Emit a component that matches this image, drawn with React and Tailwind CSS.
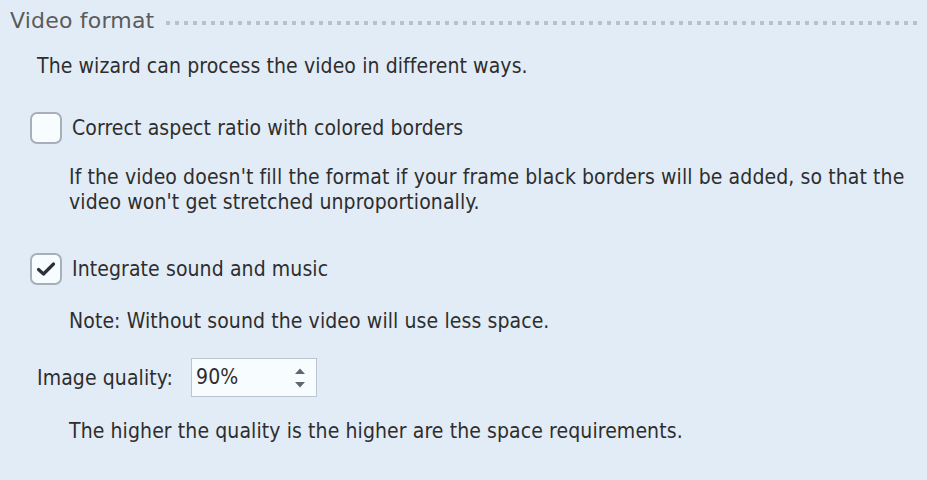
export default function App() {
  return (
    <div className="w-[927px] h-[480px] bg-[#e2ecf7] text-[#2e2e2e] text-[21px] tracking-[0.1px] overflow-hidden [font-stretch:condensed]" style={{ fontFamily: '"DejaVu Sans", sans-serif' }}>
      <div className="flex items-center pl-[10px] pr-[10px] pt-[8px] h-[34px]">
        <span className="text-[22px] text-[#5b5b5b] leading-none [font-stretch:normal] tracking-[0.2px]">Video format</span>
        <div className="flex-1 ml-[12px] h-[4px] mt-[4px] bg-[linear-gradient(to_right,#b8c1cc_4px,transparent_4px)] bg-[length:9px_4px] bg-repeat-x"></div>
      </div>
      <div className="pl-[37px] mt-[19px] leading-[26px]">The wizard can process the video in different ways.</div>

      <div className="flex items-center pl-[30px] mt-[33px]">
        <div className="w-[32px] h-[32px] rounded-[7px] border-2 border-[#a7afba] bg-[#f7fcff]"></div>
        <span className="ml-[10px] leading-[26px]">Correct aspect ratio with colored borders</span>
      </div>
      <div className="pl-[69px] pr-[10px] mt-[21px] leading-[25px]">
        If the video doesn't fill the format if your frame black borders will be added, so that the video won't get stretched unproportionally.
      </div>

      <div className="flex items-center pl-[30px] mt-[38px]">
        <div className="w-[32px] h-[32px] rounded-[7px] border-2 border-[#a7afba] bg-[#f7fcff] flex items-center justify-center">
          <svg width="20" height="16" viewBox="0 0 20 16"><path d="M2.5 8.5 L7.5 13 L17.5 3" fill="none" stroke="#2a2f3a" strokeWidth="3.2" strokeLinecap="round" strokeLinejoin="round" /></svg>
        </div>
        <span className="ml-[10px] leading-[26px]">Integrate sound and music</span>
      </div>
      <div className="pl-[69px] mt-[23px] leading-[26px]">Note: Without sound the video will use less space.</div>

      <div className="flex items-center pl-[37px] mt-[24px]">
        <span className="leading-[26px]">Image quality:</span>
        <div className="ml-[18px] w-[126px] h-[39px] border border-[#bcc5cf] bg-[#f7fcff] flex items-center pl-[4px] pr-[10px]">
          <span className="flex-1">90%</span>
          <svg width="12" height="24" viewBox="0 0 12 24">
            <path d="M1 8 L6 2.5 L11 8 Z" fill="#5f6670" />
            <path d="M1 16 L6 21.5 L11 16 Z" fill="#5f6670" />
          </svg>
        </div>
      </div>
      <div className="pl-[69px] mt-[21px] leading-[26px]">The higher the quality is the higher are the space requirements.</div>
    </div>
  );
}
